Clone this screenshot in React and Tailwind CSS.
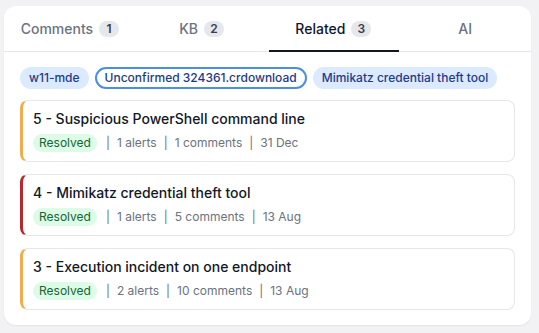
import React from "react";

const tabs = [
  { label: "Comments", count: 1 },
  { label: "KB", count: 2 },
  { label: "Related", count: 3, active: true },
  { label: "AI" },
];

const chips = [
  { label: "w11-mde" },
  { label: "Unconfirmed 324361.crdownload", selected: true },
  { label: "Mimikatz credential theft tool" },
];

const items = [
  { title: "5 - Suspicious PowerShell command line", alerts: 1, comments: 1, date: "31 Dec", color: "border-l-[#f0ad4e]" },
  { title: "4 - Mimikatz credential theft tool", alerts: 1, comments: 5, date: "13 Aug", color: "border-l-[#b52a2a]" },
  { title: "3 - Execution incident on one endpoint", alerts: 2, comments: 10, date: "13 Aug", color: "border-l-[#f0ad4e]" },
];

function Sep({ first }) {
  return (
    <span className={`${first ? "ml-[9px]" : "ml-[7px]"} mr-[7px] text-[#6b7280]`}>|</span>
  );
}

export default function App() {
  return (
    <div
      className="min-h-screen w-full bg-[#f2f2f4] pt-[6px] pl-[4px]"
      style={{ fontFamily: "Inter, 'Noto Sans', sans-serif" }}
    >
      <div className="w-[527px] h-[319px] bg-white rounded-xl shadow-[0_1px_2px_rgba(0,0,0,0.06)] flex flex-col">
        <div className="flex border-b border-[#e5e7eb]">
          {tabs.map((t) => (
            <div
              key={t.label}
              className={`relative flex-1 h-[45px] flex items-center justify-center gap-[6px] text-sm font-medium ${
                t.active ? "text-[#111827]" : "text-[#6b7280]"
              }`}
            >
              <span>{t.label}</span>
              {t.count !== undefined && (
                <span className="min-w-5 h-4 px-1.5 rounded-full bg-[#e5e7eb] text-[#374151] text-xs font-semibold flex items-center justify-center">
                  {t.count}
                </span>
              )}
              {t.active && (
                <div className="absolute left-px right-0 bottom-[-1px] h-[2px] bg-[#0f172a]" />
              )}
            </div>
          ))}
        </div>
        <div className="px-4 pt-[15px]">
          <div className="flex gap-[6px] mb-[11px]">
            {chips.map((c) => (
              <span
                key={c.label}
                className={`h-[22px] rounded-full text-xs font-medium flex items-center ${
                  c.selected
                    ? "bg-white border-2 border-[#4a8fe3] text-[#1e3a8a] px-[8px]"
                    : "bg-[#dbeafe] text-[#1e3a8a] px-[9px]"
                }`}
              >
                {c.label}
              </span>
            ))}
          </div>
          <div className="flex flex-col gap-3">
            {items.map((it) => (
              <div
                key={it.title}
                className={`h-[62px] rounded-lg border border-[#e5e7eb] border-l-[3px] ${it.color} pl-[10px] pt-2 flex flex-col`}
              >
                <div className="text-sm font-medium text-[#111827] leading-5">{it.title}</div>
                <div className="mt-[5px] flex items-center text-xs text-[#6b7280]">
                  <span className="h-[18px] px-[6px] rounded-full bg-[#dcfce7] text-[#166534] flex items-center">
                    Resolved
                  </span>
                  <Sep first />
                  <span>{it.alerts} alerts</span>
                  <Sep />
                  <span>{it.comments} comments</span>
                  <Sep />
                  <span>{it.date}</span>
                </div>
              </div>
            ))}
          </div>
        </div>
      </div>
    </div>
  );
}
